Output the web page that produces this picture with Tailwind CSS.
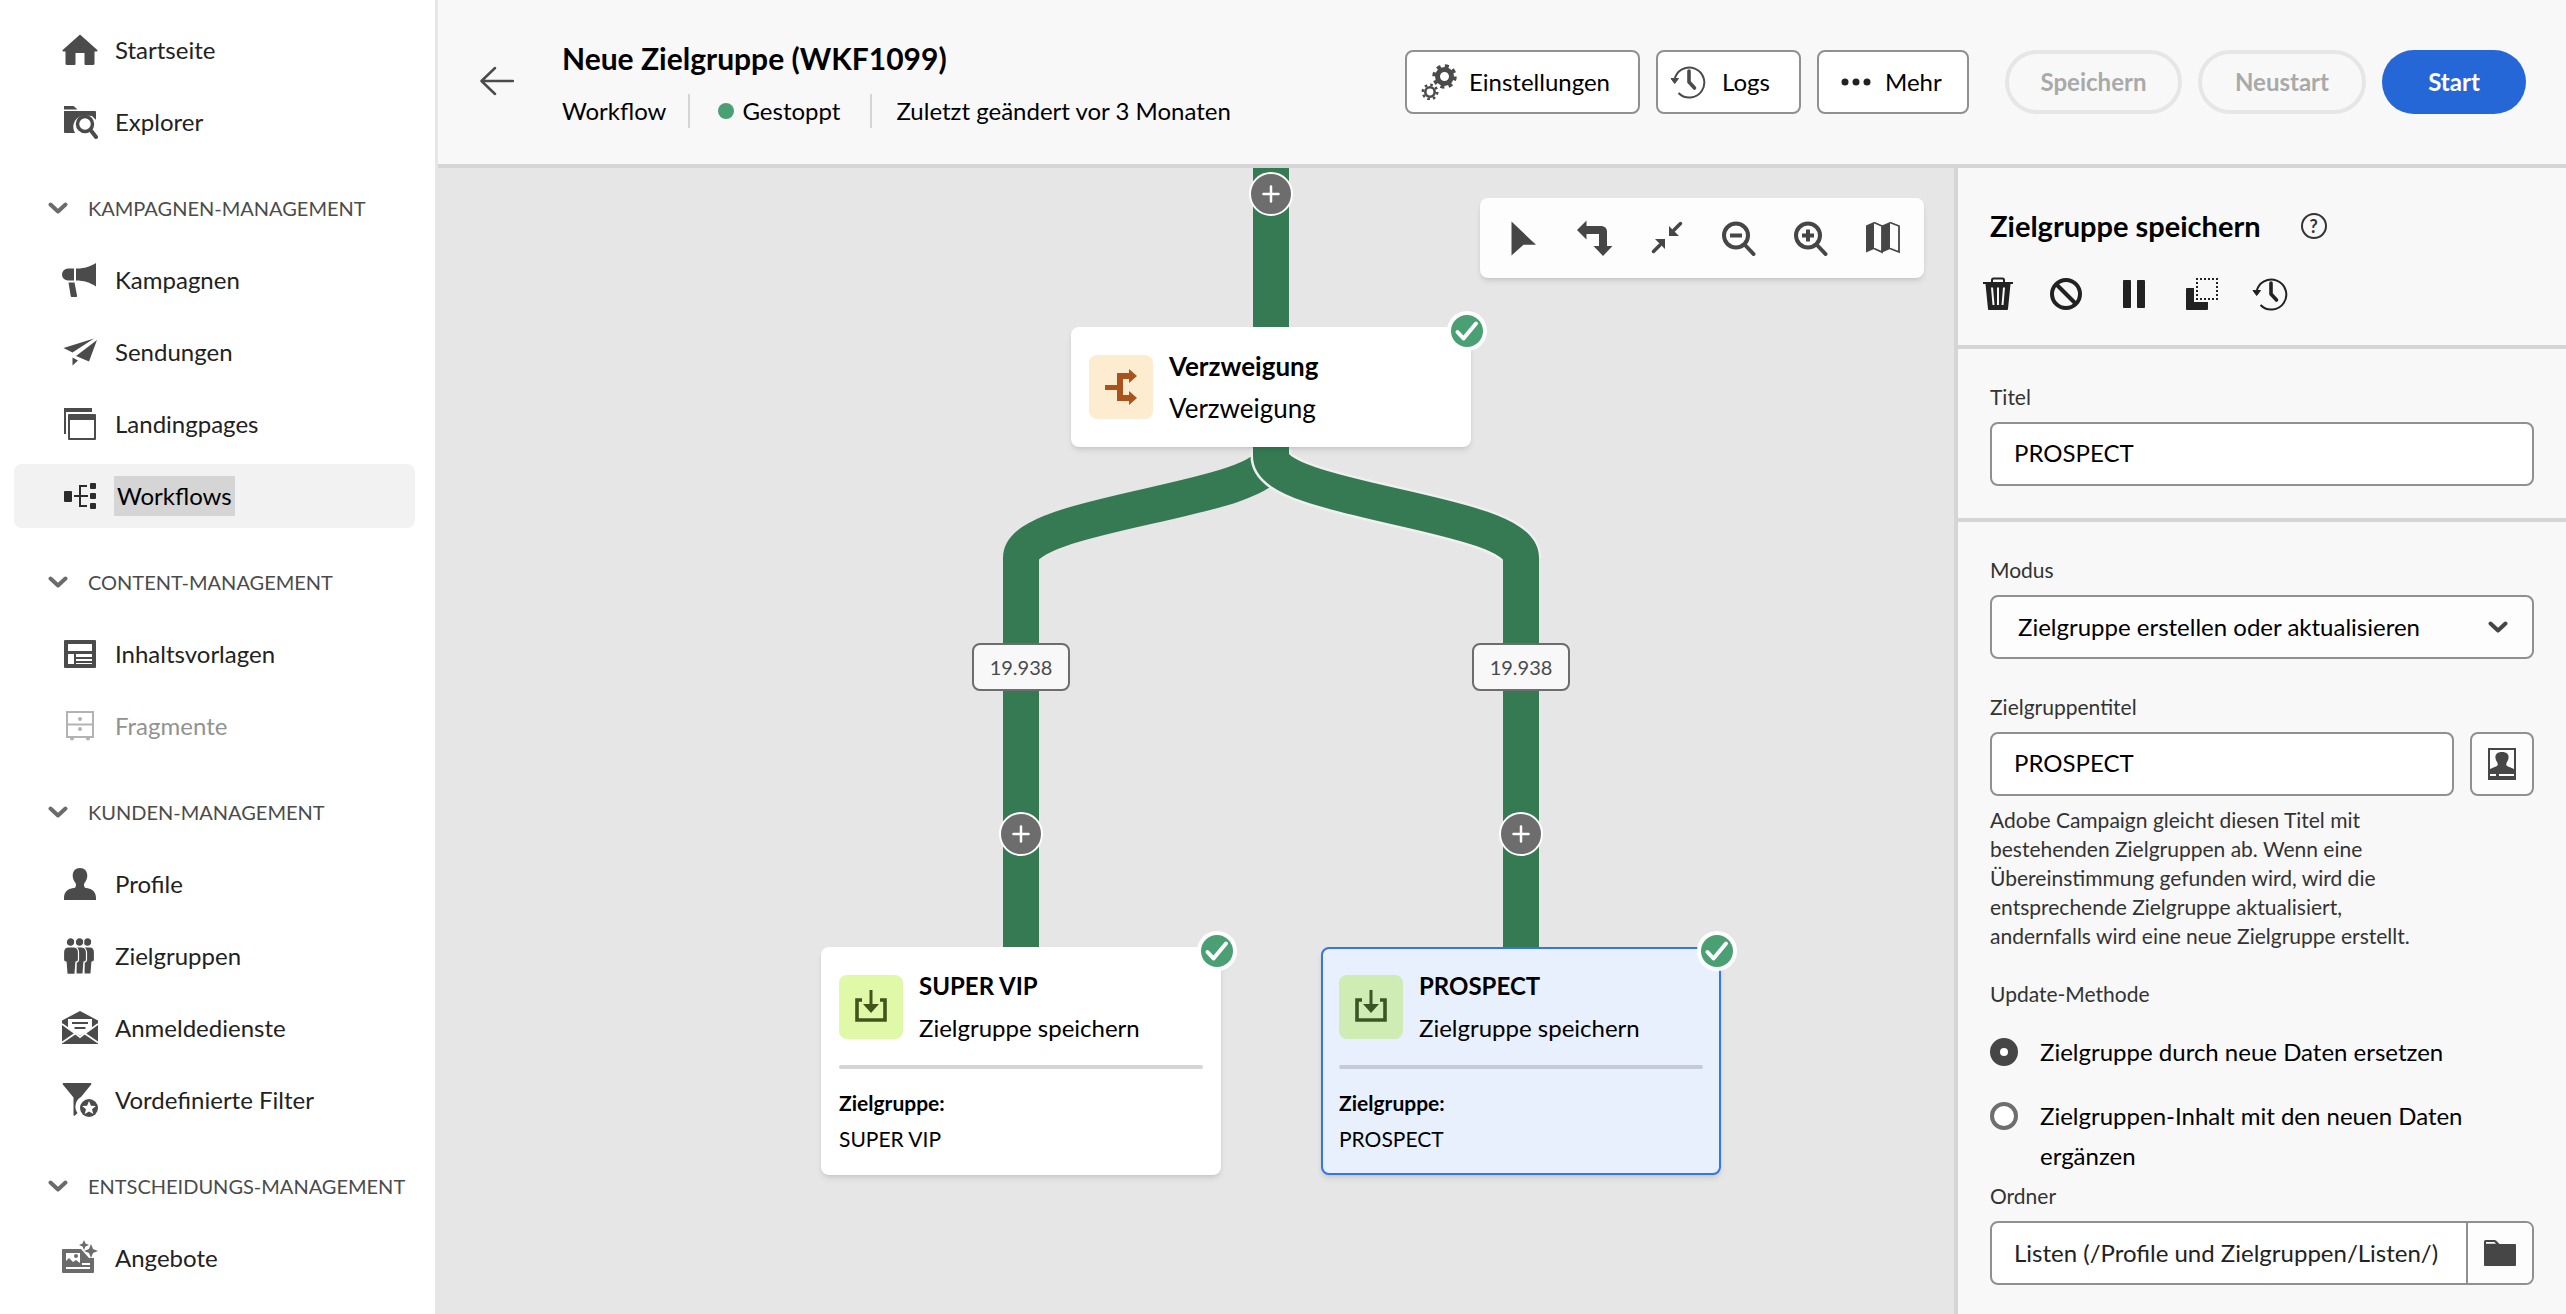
<!DOCTYPE html>
<html lang="de">
<head>
<meta charset="utf-8">
<title>Neue Zielgruppe (WKF1099)</title>
<script src="https://cdn.jsdelivr.net/npm/@tailwindcss/browser@4"></script>
</head>
<body class="bg-white font-['Lato','Open_Sans',sans-serif] text-[24px] leading-8 text-black">
<svg class="hidden" aria-hidden="true">
  <symbol id="chevron" viewBox="0 0 20 12"><path d="M2.5 2.5 10 9.500l7.500-7" fill="none" stroke="currentColor" stroke-width="4" stroke-linecap="round" stroke-linejoin="round"/></symbol>
  <symbol id="history" viewBox="0 0 36 36"><path d="M4.500 16A15 15 0 1 1 8.500 29" fill="none" stroke="currentColor" stroke-width="2"/><path d="M1 14.500h7.500L4.700 19.500z" fill="currentColor" stroke="currentColor" stroke-linejoin="round"/><path d="M19 7v11l5.500 6" fill="none" stroke="currentColor" stroke-width="3.600" stroke-linecap="round" stroke-linejoin="round"/></symbol>
  <symbol id="check" viewBox="0 0 40 40"><circle cx="20" cy="20" r="20" fill="#fff"/><circle cx="20" cy="20" r="16" fill="#4aa073"/><path d="m10.500 21 6 6.500L29 12.500" fill="none" stroke="#fff" stroke-width="4" stroke-linecap="round" stroke-linejoin="round"/></symbol>
  <symbol id="plus" viewBox="0 0 44 44"><circle cx="22" cy="22" r="21" fill="#6d6d6d" stroke="#fff" stroke-width="2"/><path d="M22 14.500v15M14.500 22h15" stroke="#fff" stroke-width="2.500" stroke-linecap="round"/></symbol>
  <symbol id="save" viewBox="0 0 36 36"><path d="M9 11H4v20h28V11h-5" fill="none" stroke="currentColor" stroke-width="3.600"/><path d="M16.500 1h3v14H26l-8 9-8-9h6.500z" fill="currentColor"/></symbol>
</svg>

<div class="flex min-h-screen">
  <nav aria-label="Hauptnavigation" class="flex w-[438px] shrink-0 flex-col gap-[22px] border-r-[3px] border-[#e6e6e6] pt-[18px] pr-5 pl-[14px] text-[#222]">
    <ul class="flex flex-col gap-2">
      <li><a href="#" class="flex h-16 items-center gap-[17px] pl-12">
        <svg class="size-9 text-[#4b4b4b]" viewBox="0 0 36 36" fill="currentColor"><path d="M18 2.500 35.300 18c.5.500.2 1.500-.6 1.500H32.500V31.500a1.500 1.500 0 0 1-1.500 1.500h-7.500a1 1 0 0 1-1-1V21h-9v11a1 1 0 0 1-1 1H5a1.500 1.500 0 0 1-1.500-1.500V19.500H1.300c-.8 0-1.100-1-.6-1.500z"/></svg>
        Startseite</a></li>
      <li><a href="#" class="flex h-16 items-center gap-[17px] pl-12">
        <svg class="size-9 text-[#4b4b4b]" viewBox="0 0 36 36" fill="currentColor"><path d="M2 2h9.500l4 3.500H2z"/><path d="M3 7h30a1 1 0 0 1 1 1v8A13 13 0 0 0 13 29H3a1 1 0 0 1-1-1V7z"/><path d="M23 11.500A11.500 11.500 0 0 0 12 27l2 3h10l9-6 1-8-4-4z" fill="#fff"/><circle cx="23" cy="20" r="7.500" fill="none" stroke="currentColor" stroke-width="3.500"/><path d="m28.500 26 5.500 7" stroke="currentColor" stroke-width="4" stroke-linecap="round"/></svg>
        Explorer</a></li>
    </ul>

    <section class="flex flex-col gap-2">
      <button class="flex h-16 items-center gap-5 pl-[34px] text-[20px] whitespace-nowrap text-[#4b4b4b]"><svg class="h-3 w-5 shrink-0 text-[#6b6b6b]"><use href="#chevron"/></svg>KAMPAGNEN-MANAGEMENT</button>
      <a href="#" class="flex h-16 items-center gap-[17px] pl-12">
        <svg class="size-9 text-[#4b4b4b]" viewBox="0 0 36 36" fill="currentColor"><path d="M12 6.500H6a6 6 0 0 0 0 12h6zM14 6.500c8 .3 14-2 20-5.500v23.500c-6-4-12-6-20-6zM6.500 20.500h6L15 33.500c.2 1-.3 1.500-1 1.500h-4c-.8 0-1.200-.5-1.300-1z"/></svg>
        Kampagnen</a>
      <a href="#" class="flex h-16 items-center gap-[17px] pl-12">
        <svg class="size-9 text-[#4b4b4b]" viewBox="0 0 36 36" fill="currentColor"><path d="M1.500 14 32 4.500 10.500 18.500zM35 6 27 27.500 14 22zM10.500 23.500l5.500 3-5.500 5z"/></svg>
        Sendungen</a>
      <a href="#" class="flex h-16 items-center gap-[17px] pl-12">
        <svg class="size-9 text-[#4b4b4b]" viewBox="0 0 36 36" fill="currentColor"><path d="M2 2h28v4H4v22H2zM6 9a1 1 0 0 1 1-1h26a1 1 0 0 1 1 1v24a1 1 0 0 1-1 1H7a1 1 0 0 1-1-1zm2 5v18h24V14z" fill-rule="evenodd"/></svg>
        Landingpages</a>
      <a href="#" aria-current="page" class="flex h-16 w-[401px] items-center gap-4 rounded-lg bg-[#f2f2f2] pl-12 text-black">
        <svg class="size-9 text-[#2c2c2c]" viewBox="0 0 36 36" fill="currentColor"><rect x="2" y="13" width="8" height="11" rx="1"/><rect x="28" y="5" width="6" height="6" rx="1"/><rect x="28" y="15" width="6" height="6" rx="1"/><rect x="28" y="25" width="6" height="6" rx="1"/><path d="M12 18h14M25 8h-7v20h7" fill="none" stroke="currentColor" stroke-width="2"/></svg>
        <span class="bg-[#d5d5d5] px-[3px] py-1">Workflows</span></a>
    </section>

    <section class="flex flex-col gap-2">
      <button class="flex h-16 items-center gap-5 pl-[34px] text-[20px] whitespace-nowrap text-[#4b4b4b]"><svg class="h-3 w-5 shrink-0 text-[#6b6b6b]"><use href="#chevron"/></svg>CONTENT-MANAGEMENT</button>
      <a href="#" class="flex h-16 items-center gap-[17px] pl-12">
        <svg class="size-9 text-[#4b4b4b]" viewBox="0 0 36 36" fill="currentColor"><path fill-rule="evenodd" d="M3 4h30a1 1 0 0 1 1 1v26a1 1 0 0 1-1 1H3a1 1 0 0 1-1-1V5a1 1 0 0 1 1-1zm3 4v7h24V8zm0 10v10h6V18zm8 0v3h16v-3zm0 5v5h16v-5z"/><path d="M14 25h16v2H14z"/></svg>
        Inhaltsvorlagen</a>
      <a href="#" aria-disabled="true" class="flex h-16 items-center gap-[17px] pl-12 text-[#929292]">
        <svg class="size-9 text-[#b3b3b3]" viewBox="0 0 36 36" fill="currentColor"><path d="M5 4h26v25H5zM5 16.500h26" fill="none" stroke="currentColor" stroke-width="2"/><circle cx="18" cy="11" r="2"/><circle cx="18" cy="21" r="2"/><path d="M8 29h4v1.500a2 2 0 0 1-4 0zM24 29h4v1.500a2 2 0 0 1-4 0z"/></svg>
        Fragmente</a>
    </section>

    <section class="flex flex-col gap-2">
      <button class="flex h-16 items-center gap-5 pl-[34px] text-[20px] whitespace-nowrap text-[#4b4b4b]"><svg class="h-3 w-5 shrink-0 text-[#6b6b6b]"><use href="#chevron"/></svg>KUNDEN-MANAGEMENT</button>
      <a href="#" class="flex h-16 items-center gap-[17px] pl-12">
        <svg class="size-9 text-[#4b4b4b]" viewBox="0 0 36 36" fill="currentColor"><path d="M18 2c4.500 0 7.300 3 7.300 7.500 0 3-1.300 5.500-2.800 7.500-.8 1-.5 3 0 4 .3.700 1 .900 2 1 6 .800 9.500 4 9.500 10v2H2v-2c0-6 3.500-9.200 9.500-10 1-.1 1.700-.3 2-1 .5-1 .8-3 0-4-1.500-2-2.800-4.500-2.800-7.500C10.700 5 13.500 2 18 2z"/></svg>
        Profile</a>
      <a href="#" class="flex h-16 items-center gap-[17px] pl-12">
        <svg class="size-9 text-[#4b4b4b]" viewBox="0 0 36 36" fill="currentColor" stroke="#fff" stroke-width="1.200"><circle cx="25.500" cy="4" r="4.300"/><path d="M22 9h6c3 0 4.500 2.500 4.500 5.500v7c0 1.500-1 2.500-2.500 2.500l-1 12h-7z"/><circle cx="17.500" cy="4" r="4.300"/><path d="M14 9h5c3.500 0 5.500 2.500 5.500 5.500v7c0 1.500-1 2.500-2.500 2.500l-1 12h-7z"/><circle cx="8.500" cy="4" r="4.300"/><path d="M6.500 9h5c3.500 0 5 2.500 5 5.500v7c0 1.500-1 2.500-2.500 2.500l-1 12.300H5L4 24c-1.500 0-2.500-1-2.500-2.500v-7C1.500 11.500 3.500 9 6.500 9z"/></svg>
        Zielgruppen</a>
      <a href="#" class="flex h-16 items-center gap-[17px] pl-12">
        <svg class="size-9 text-[#4b4b4b]" viewBox="0 0 36 36" fill="currentColor"><path d="M18 1 36 10.500V34H0V10.500z"/><path d="M6 9h24v9L18 25.500 6 18z" fill="#fff"/><path d="M10 12h16v2H10zM12.500 17h11v2h-11z"/><path d="M0 14 14 24M36 14 22 24M0 32.500l14-9.500M36 32.500 22 23M13 23l5 4 5-4" fill="none" stroke="#fff" stroke-width="1.800"/></svg>
        Anmeldedienste</a>
      <a href="#" class="flex h-16 items-center gap-[17px] pl-12">
        <svg class="size-9 text-[#4b4b4b]" viewBox="0 0 36 36" fill="currentColor"><path d="M1.500 1h27c.9 0 1.200.8.700 1.500L19 15A11 11 0 0 0 15.500 31l-2.500 2.500c-.6.500-1.500.2-1.500-.7V15.500L.800 2.500C.300 1.800.700 1 1.500 1z"/><circle cx="27" cy="26" r="9"/><path d="m27 19 1.900 4.700 5 .3-3.900 3.200 1.300 4.900L27 29.400l-4.300 2.700 1.300-4.900-3.900-3.200 5-.3z" fill="#fff"/></svg>
        Vordefinierte Filter</a>
    </section>

    <section class="flex flex-col gap-2">
      <button class="flex h-16 items-center gap-5 pl-[34px] text-[20px] whitespace-nowrap text-[#4b4b4b]"><svg class="h-3 w-5 shrink-0 text-[#6b6b6b]"><use href="#chevron"/></svg>ENTSCHEIDUNGS-MANAGEMENT</button>
      <a href="#" class="flex h-16 items-center gap-[17px] pl-12">
        <svg class="size-9 text-[#6b6b6b]" viewBox="0 0 36 36" fill="currentColor"><path fill-rule="evenodd" d="M1 9h18l8 9h5v14a1 1 0 0 1-1 1H1a1 1 0 0 1-1-1V10a1 1 0 0 1 1-1zm3 4v8l3-3 4 4 3-2 4 3v-10zm16 10v2h8v-2zM4 27v2h24v-2z"/><circle cx="14" cy="16" r="2"/><path d="m22 0 1.500 3.500L27 5l-3.500 1.500L22 10l-1.500-3.500L17 5l3.500-1.500zM29 4l2 5 5 2-5 2-2 5-2-5-5-2 5-2z"/></svg>
        Angebote</a>
    </section>
  </nav>

  <div class="flex min-w-0 flex-1 flex-col">
    <header class="flex h-[168px] shrink-0 items-start border-b-4 border-[#d5d5d5] bg-[#f8f8f8] px-10">
      <button aria-label="Zurück" class="mt-[63px] text-[#4b4b4b]"><svg class="size-9" viewBox="0 0 36 36" fill="none" stroke="currentColor" stroke-width="2.500" stroke-linecap="round" stroke-linejoin="round"><path d="M35 18H4M17 5 3.500 18 17 31"/></svg></button>
      <div class="mt-[38px] ml-12">
        <h1 class="text-[30px] leading-10 font-bold">Neue Zielgruppe (WKF1099)</h1>
        <div class="mt-4 flex h-[34px] items-center">
          <span>Workflow</span>
          <span class="ml-[22px] flex h-full items-center gap-2 border-l-2 border-[#d5d5d5] pl-7"><span class="size-4 rounded-full bg-[#4aa073]"></span>Gestoppt</span>
          <span class="ml-[30px] flex h-full items-center border-l-2 border-[#d5d5d5] pl-6">Zuletzt geändert vor 3 Monaten</span>
        </div>
      </div>
      <div class="mt-[50px] ml-auto flex gap-4">
        <button class="flex h-16 w-[235px] items-center gap-3 rounded-lg border-2 border-[#909090] bg-white pl-3.5">
          <svg class="size-9 text-[#4b4b4b]" viewBox="0 0 36 36" fill="none" stroke="currentColor"><circle cx="23.500" cy="12.500" r="7" stroke-width="5"/><circle cx="23.500" cy="12.500" r="10.500" stroke-width="3.500" stroke-dasharray="4 4.250"/><circle cx="9" cy="28" r="4.700" stroke-width="2.600"/><circle cx="9" cy="28" r="7.200" stroke-width="2.600" stroke-dasharray="2.600 3.055"/></svg>
          Einstellungen</button>
        <button class="flex h-16 w-[145px] items-center gap-4 rounded-lg border-2 border-[#909090] bg-white pl-3"><svg class="size-9 text-[#4b4b4b]"><use href="#history"/></svg>Logs</button>
        <button class="flex h-16 w-[152px] items-center gap-3.5 rounded-lg border-2 border-[#909090] bg-white pl-[22px]"><svg class="h-2 w-[30px]" viewBox="0 0 30 8" fill="#222"><circle cx="4" cy="4" r="3.500"/><circle cx="15" cy="4" r="3.500"/><circle cx="26" cy="4" r="3.500"/></svg>Mehr</button>
        <div class="ml-5 flex gap-4">
          <button disabled class="h-16 w-[177px] rounded-full border-4 border-[#e6e6e6] font-bold text-[#a9a9a9]">Speichern</button>
          <button disabled class="h-16 w-[168px] rounded-full border-4 border-[#e6e6e6] font-bold text-[#a9a9a9]">Neustart</button>
          <button class="h-16 w-36 rounded-full bg-[#2667d8] font-bold text-white">Start</button>
        </div>
      </div>
    </header>

    <div class="flex flex-1">
      <!-- Workflow canvas: nodes and connectors sit at free coordinates -->
      <main class="relative min-w-0 flex-1 overflow-hidden bg-[#e6e6e6]">
        <svg class="absolute top-0 left-0 h-[800px] w-[1300px]" viewBox="0 0 1300 800" fill="none" stroke="#357a53" stroke-width="36">
          <path d="M833 0V300"/>
          <path d="M833 289C833 333 583 344 583 390V790"/>
          <path d="M833 281V288C833 333 1083 344 1083 390" stroke="#f0f0f0" stroke-width="41"/>
          <path d="M833 276V288C833 333 1083 344 1083 390V790"/>
        </svg>

        <button aria-label="Aktivität hinzufügen" class="absolute top-1 left-[811px] size-11"><svg class="size-11"><use href="#plus"/></svg></button>
        <button aria-label="Aktivität hinzufügen" class="absolute top-[644px] left-[561px] size-11"><svg class="size-11"><use href="#plus"/></svg></button>
        <button aria-label="Aktivität hinzufügen" class="absolute top-[644px] left-[1061px] size-11"><svg class="size-11"><use href="#plus"/></svg></button>

        <div class="absolute top-[475px] left-[534px] flex h-12 w-[98px] items-center justify-center rounded-lg border-2 border-[#6d6d6d] bg-[#f8f8f8] text-[20px] text-[#4b4b4b]">19.938</div>
        <div class="absolute top-[475px] left-[1034px] flex h-12 w-[98px] items-center justify-center rounded-lg border-2 border-[#6d6d6d] bg-[#f8f8f8] text-[20px] text-[#4b4b4b]">19.938</div>

        <article class="absolute top-[159px] left-[633px] h-[120px] w-[400px] rounded-lg bg-white p-[18px] shadow-md">
          <div class="flex gap-4">
            <span class="mt-[10px] flex size-16 items-center justify-center rounded-lg bg-[#fdecd0]"><svg class="size-9 text-[#a8531c]" viewBox="0 0 36 36" fill="currentColor"><path d="M2 16h12V4h12V0l8 7-8 7V10h-6v16h6v-4l8 7-8 7v-4H14V21H2z"/></svg></span>
            <div class="text-[26px] leading-[42px]"><h2 class="font-bold">Verzweigung</h2><p>Verzweigung</p></div>
          </div>
          <svg class="absolute -top-4 -right-4 size-10"><use href="#check"/></svg>
        </article>

        <article class="absolute top-[779px] left-[383px] h-[228px] w-[400px] rounded-lg bg-white p-[18px] shadow-md">
          <div class="flex gap-4">
            <span class="mt-[10px] flex size-16 items-center justify-center rounded-lg bg-[#e0f9a9]"><svg class="size-9 text-[#40541b]"><use href="#save"/></svg></span>
            <div class="leading-[42px]"><h2 class="font-bold">SUPER VIP</h2><p>Zielgruppe speichern</p></div>
          </div>
          <div class="mt-4 h-1 rounded-full bg-[#d5d5d5]"></div>
          <div class="mt-4 text-[21px] leading-9"><h3 class="font-bold">Zielgruppe:</h3><p>SUPER VIP</p></div>
          <svg class="absolute -top-4 -right-4 size-10"><use href="#check"/></svg>
        </article>

        <article class="absolute top-[779px] left-[883px] h-[228px] w-[400px] rounded-lg border-2 border-[#3376e6] bg-[#e9f0fd] p-4 shadow-md">
          <div class="flex gap-4">
            <span class="mt-[10px] flex size-16 items-center justify-center rounded-lg bg-[#cfecb4]"><svg class="size-9 text-[#3d5526]"><use href="#save"/></svg></span>
            <div class="leading-[42px]"><h2 class="font-bold">PROSPECT</h2><p>Zielgruppe speichern</p></div>
          </div>
          <div class="mt-4 h-1 rounded-full bg-[#c4cad6]"></div>
          <div class="mt-4 text-[21px] leading-9"><h3 class="font-bold">Zielgruppe:</h3><p>PROSPECT</p></div>
          <svg class="absolute -top-[18px] -right-[18px] size-10"><use href="#check"/></svg>
        </article>

        <div role="toolbar" aria-label="Ansicht" class="absolute top-[30px] right-[30px] flex h-20 items-center gap-9 rounded-lg bg-[#fdfdfd] pr-[23px] pl-[25px] text-[#464646] shadow-md">
          <button aria-label="Auswählen"><svg class="size-9" viewBox="0 0 36 36" fill="currentColor"><path d="M6.500 1.500 31 24.800H18.500L6.500 35.500z"/></svg></button>
          <button aria-label="Ausrichtung"><svg class="size-9" viewBox="0 0 36 36" fill="currentColor"><path d="M0 10 9.500.500V6h15A5.500 5.500 0 0 1 30 11.500V26h5.500L26 36l-9.500-10H22V14H9.500v5.500z"/></svg></button>
          <button aria-label="Anpassen"><svg class="size-9" viewBox="0 0 36 36" fill="currentColor"><path d="M4.500 31.500 11 25M25 10l6.500-6.500" stroke="currentColor" stroke-width="3.500" stroke-linecap="round"/><path d="M6 19h10v10l-3-3-4-4zM20 6v10h10l-3-3-4-4z"/></svg></button>
          <button aria-label="Verkleinern"><svg class="size-9" viewBox="0 0 36 36" fill="none" stroke="currentColor" stroke-width="4"><circle cx="15" cy="15.500" r="12"/><path d="m24 25 8.500 9" stroke-linecap="round"/><path d="M9 15.500h12"/></svg></button>
          <button aria-label="Vergrößern"><svg class="size-9" viewBox="0 0 36 36" fill="none" stroke="currentColor" stroke-width="4"><circle cx="15" cy="15.500" r="12"/><path d="m24 25 8.500 9" stroke-linecap="round"/><path d="M9 15.500h12M15 9.500v12"/></svg></button>
          <button aria-label="Karte"><svg class="size-9" viewBox="0 0 36 36" fill="currentColor"><path d="M1 5.500 9 2v27l-8 3.500zM17 5.500 25 2v27l-8 3.500z"/><path d="m9 2.500 8 3.500v26l-8-3.500M25 2.500 34 6v26l-9-3.500" fill="none" stroke="currentColor" stroke-width="1.800"/></svg></button>
        </div>
      </main>

      <aside class="w-[612px] shrink-0 border-l-4 border-[#d5d5d5] bg-[#f8f8f8]">
        <div class="border-b-4 border-[#d5d5d5] pt-10 pb-[33px]">
          <div class="flex items-center gap-10 pl-8">
            <h2 class="text-[29px] leading-9 font-bold">Zielgruppe speichern</h2>
            <button aria-label="Hilfe" class="flex size-[26px] items-center justify-center rounded-full border-2 border-[#333] text-[18px] leading-none font-bold text-[#333]">?</button>
          </div>
          <div class="mt-8 flex gap-8 pl-[22px] text-[#222]">
            <button aria-label="Löschen"><svg class="size-9" viewBox="0 0 36 36" fill="currentColor"><path d="M12 6V4a1.500 1.500 0 0 1 1.500-1.500h9A1.500 1.500 0 0 1 24 4v2" fill="none" stroke="currentColor" stroke-width="2"/><path fill-rule="evenodd" d="M3 6h30v2h-2.500L28 33a1 1 0 0 1-1 1H9a1 1 0 0 1-1-1L5.500 8H3zm8 5.500L12.500 29h2L13 11.500zm6 0V29h2V11.500zm6 0L21.500 29h2L25 11.500z"/></svg></button>
            <button aria-label="Deaktivieren"><svg class="size-9" viewBox="0 0 36 36" fill="none" stroke="currentColor" stroke-width="4"><circle cx="18" cy="18" r="14"/><path d="m8 8 20 20"/></svg></button>
            <button aria-label="Pause"><svg class="size-9" viewBox="0 0 36 36" fill="currentColor"><rect x="7" y="4" width="8" height="28" rx="1"/><rect x="21" y="4" width="8" height="28" rx="1"/></svg></button>
            <button aria-label="Duplizieren"><svg class="size-9" viewBox="0 0 36 36" fill="currentColor"><path d="M2 13a1 1 0 0 1 1-1h7v14h14v7a1 1 0 0 1-1 1H3a1 1 0 0 1-1-1z"/><path d="M12 3h22M12 23h22M13 6v16M33 6v16" fill="none" stroke="currentColor" stroke-width="2" stroke-dasharray="2 2"/></svg></button>
            <button aria-label="Verlauf"><svg class="size-9"><use href="#history"/></svg></button>
          </div>
        </div>

        <div class="flex flex-col border-b-4 border-[#d5d5d5] px-8 pt-9 pb-8">
          <label for="title" class="text-[21px] leading-6 text-[#333]">Titel</label>
          <input id="title" value="PROSPECT" class="mt-[13px] h-16 rounded-lg border-2 border-[#909090] bg-white px-[22px] pb-1">
        </div>

        <div class="flex flex-col px-8 pt-9 pb-7">
          <label for="mode" class="text-[21px] leading-6 text-[#333]">Modus</label>
          <div class="relative mt-[13px]">
            <select id="mode" class="h-16 w-full appearance-none rounded-lg border-2 border-[#909090] bg-[#fdfdfd] px-[26px]"><option>Zielgruppe erstellen oder aktualisieren</option></select>
            <svg class="pointer-events-none absolute top-[26px] right-[26px] h-3 w-5 text-[#464646]"><use href="#chevron"/></svg>
          </div>

          <label for="audience" class="mt-9 text-[21px] leading-6 text-[#333]">Zielgruppentitel</label>
          <div class="mt-[13px] flex gap-4">
            <input id="audience" value="PROSPECT" class="h-16 min-w-0 flex-1 rounded-lg border-2 border-[#909090] bg-white px-[22px] pb-1">
            <button aria-label="Zielgruppe wählen" class="flex size-16 items-center justify-center rounded-lg border-2 border-[#909090] bg-[#fdfdfd] text-[#464646]"><svg class="size-9" viewBox="0 0 36 36" fill="currentColor"><path fill-rule="evenodd" d="M4 2h28v32H4zm2 2v19l7-3c1-1 1-2 0-4-3-5-2-10 5-10s8 5 5 10c-1 2-1 3 0 4l7 3V4zm0 24v2h6v-2zm9 0v2h15v-2z"/></svg></button>
          </div>
          <p class="mt-[9px] w-[440px] text-[21px] leading-[29px] text-[#333]">Adobe Campaign gleicht diesen Titel mit bestehenden Zielgruppen ab. Wenn eine Übereinstimmung gefunden wird, wird die entsprechende Zielgruppe aktualisiert, andernfalls wird eine neue Zielgruppe erstellt.</p>

          <fieldset class="mt-8">
            <legend class="text-[21px] leading-6 text-[#333]">Update-Methode</legend>
            <div class="mt-[26px] flex flex-col gap-6">
              <label class="flex items-start gap-[22px] leading-10"><input type="radio" name="method" checked class="mt-1.5 size-7 shrink-0 appearance-none rounded-full border-[10px] border-[#464646] bg-white">Zielgruppe durch neue Daten ersetzen</label>
              <label class="flex items-start gap-[22px] leading-10"><input type="radio" name="method" class="mt-1.5 size-7 shrink-0 appearance-none rounded-full border-4 border-[#6e6e6e] bg-white">Zielgruppen-Inhalt mit den neuen Daten ergänzen</label>
            </div>
          </fieldset>

          <label for="folder" class="mt-2 text-[21px] leading-6 text-[#333]">Ordner</label>
          <div class="mt-[13px] flex h-16 overflow-hidden rounded-lg border-2 border-[#909090] bg-white">
            <input id="folder" value="Listen (/Profile und Zielgruppen/Listen/)" class="min-w-0 flex-1 pl-[22px] text-[#222]">
            <button aria-label="Ordner wählen" class="flex w-[66px] items-center justify-center border-l-2 border-[#909090] bg-[#fdfdfd] text-[#464646]"><svg class="size-9" viewBox="0 0 36 36" fill="currentColor"><path d="M2 9V6.500A1.500 1.500 0 0 1 3.500 5h9a2 2 0 0 1 1.500.6L17.500 9H33a1 1 0 0 1 1 1v20a1 1 0 0 1-1 1H3a1 1 0 0 1-1-1z"/><path d="M4 8.700V7h8.300l1.800 1.700z" fill="#fdfdfd"/></svg></button>
          </div>
        </div>
      </aside>
    </div>
  </div>
</div>
</body>
</html>
